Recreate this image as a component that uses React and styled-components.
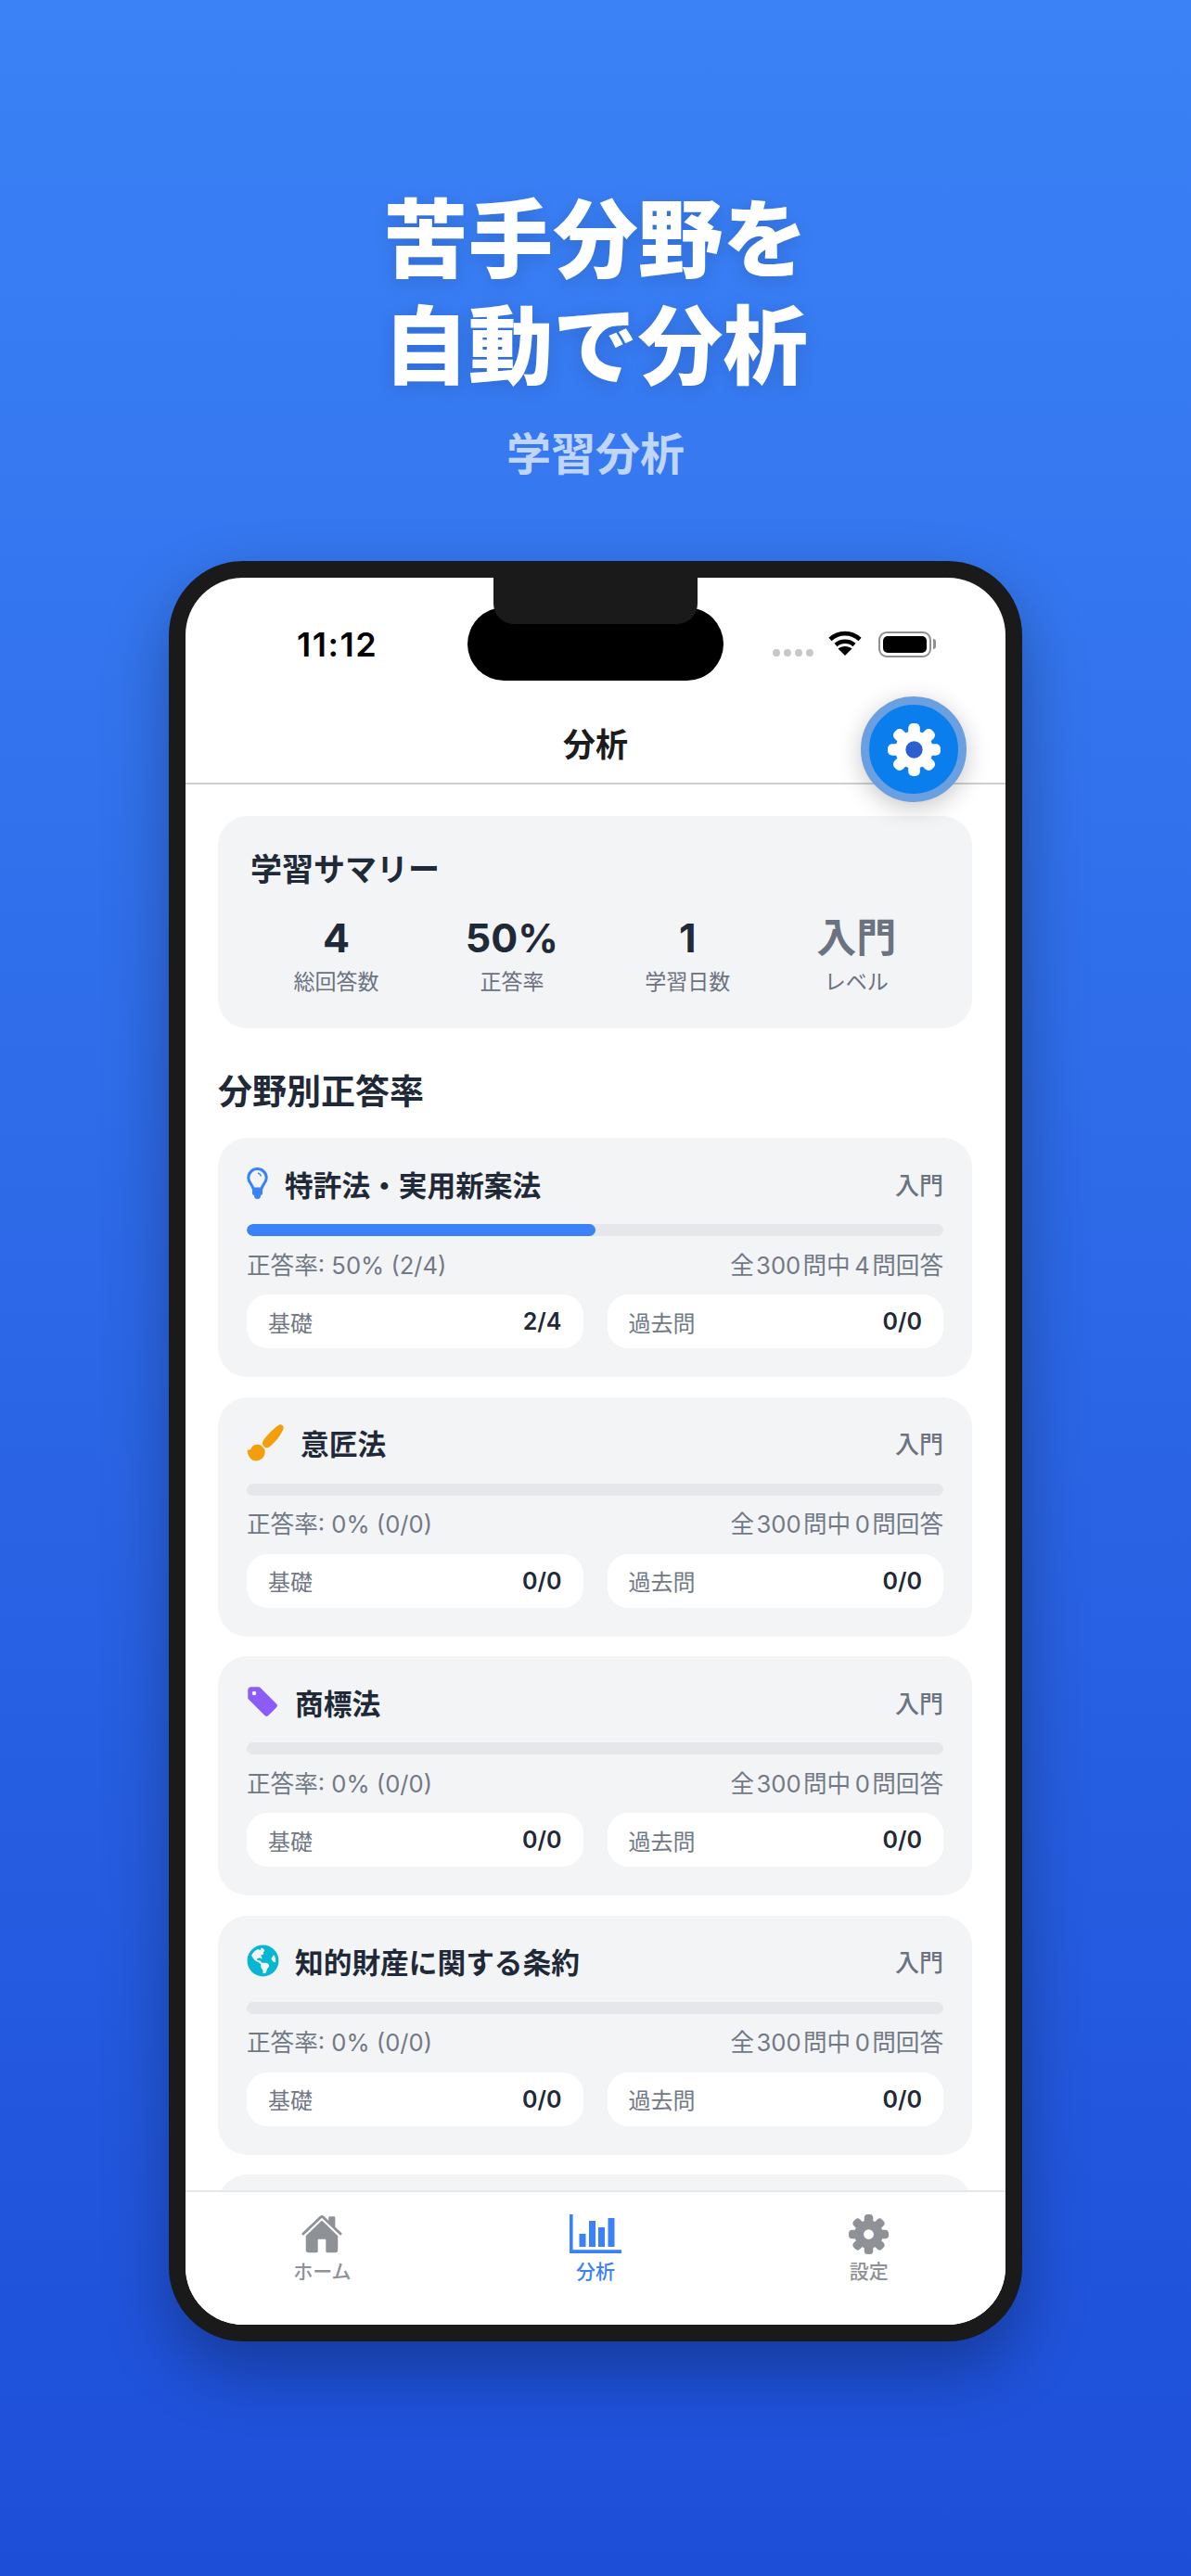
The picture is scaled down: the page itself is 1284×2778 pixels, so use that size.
import React from "react";
import styled, { createGlobalStyle } from "styled-components";
import { IoPricetag, IoHome } from "react-icons/io5";
import { FaGlobeAmericas } from "react-icons/fa";

const Global = createGlobalStyle`
  html, body { margin: 0; padding: 0; }
  body { font-family: Inter, "Noto Sans CJK JP", sans-serif; }
`;

const Page = styled.div`
  width: 1284px;
  height: 2778px;
  overflow: hidden;
  background: linear-gradient(180deg, #3b82f6 0%, #1d4ed8 100%);
  display: flex;
  flex-direction: column;
  align-items: center;
  padding-top: 195px;
  box-sizing: border-box;
`;
const HeroTitle = styled.h1`
  margin: 0;
  font-family: "Noto Sans CJK JP", sans-serif;
  font-size: 91.5px;
  line-height: 114.5px;
  font-weight: 900;
  color: #fff;
  text-align: center;
  text-shadow: 0 4px 20px rgba(0, 0, 0, 0.12);
`;
const HeroSub = styled.div`
  margin-top: 32px;
  font-family: "Noto Sans CJK JP", sans-serif;
  font-size: 48px;
  line-height: 60px;
  font-weight: 700;
  color: rgba(255, 255, 255, 0.7);
`;
const Phone = styled.div`
  margin-top: 89px;
  width: 920px;
  height: 1920px;
  flex: none;
  box-sizing: border-box;
  padding: 18px;
  background: #1a1a1a;
  border-radius: 80px;
  box-shadow: 0 30px 70px rgba(0, 0, 0, 0.3);
`;
const Screen = styled.div`
  position: relative;
  width: 884px;
  height: 1884px;
  background: #fff;
  border-radius: 62px;
  overflow: hidden;
  display: flex;
  flex-direction: column;
`;
const Notch = styled.div`
  position: absolute;
  top: 0;
  left: 332px;
  width: 220px;
  height: 50px;
  background: #1a1a1a;
  border-radius: 0 0 22px 22px;
  z-index: 3;
`;
const Island = styled.div`
  position: absolute;
  top: 32px;
  left: 304px;
  width: 276px;
  height: 79px;
  background: #000;
  border-radius: 40px;
  z-index: 2;
`;
const StatusBar = styled.div`
  height: 136px;
  flex: none;
  box-sizing: border-box;
  padding: 54px 80px 0 120px;
  display: flex;
  justify-content: space-between;
  align-items: flex-start;
`;
const Time = styled.div`
  font-size: 36px;
  line-height: 36px;
  font-weight: 600;
  letter-spacing: 1.5px;
  color: #000;
`;
const StatusIcons = styled.div`
  display: flex;
  align-items: center;
  height: 36px;
`;
const Dots = styled.div`
  display: flex;
  gap: 4px;
  margin-right: 16px;
  margin-top: 18px;
`;
const Dot = styled.span`
  width: 8px;
  height: 8px;
  border-radius: 50%;
  background: #c7c7cc;
`;
const Battery = styled.div`
  margin-left: 18px;
  width: 57px;
  height: 28px;
  box-sizing: border-box;
  border: 2.5px solid #8e8e93;
  border-radius: 9px;
  padding: 3px;
  position: relative;
  &::after {
    content: "";
    position: absolute;
    right: -6.5px;
    top: 6px;
    width: 3px;
    height: 11px;
    background: #8e8e93;
    border-radius: 0 3px 3px 0;
  }
`;
const BatteryFill = styled.div`
  width: 100%;
  height: 100%;
  background: #000;
  border-radius: 5px;
`;
const Header = styled.div`
  height: 87px;
  flex: none;
  box-sizing: border-box;
  border-bottom: 2px solid #cfcfd2;
  padding-bottom: 2px;
  display: flex;
  align-items: center;
  justify-content: center;
  font-size: 35px;
  font-weight: 600;
  color: #1c1c1e;
`;
const Fab = styled.div`
  position: absolute;
  top: 128px;
  left: 728px;
  width: 114px;
  height: 114px;
  box-sizing: border-box;
  border-radius: 50%;
  background: #0b7eee;
  border: 9px solid #6aa0e0;
  display: flex;
  align-items: center;
  justify-content: center;
  box-shadow: 0 6px 26px rgba(0, 0, 0, 0.22);
  z-index: 4;
`;
const Scroll = styled.div`
  flex: 1;
  min-height: 0;
  overflow: hidden;
  padding: 34px 36px 0 35px;
`;
const Summary = styled.section`
  height: 229px;
  box-sizing: border-box;
  background: #f3f4f6;
  border-radius: 32px;
  padding: 38px 35px 0;
`;
const SummaryTitle = styled.h2`
  margin: 0;
  font-size: 34px;
  line-height: 40px;
  font-weight: 600;
  color: #1f2937;
`;
const StatsRow = styled.div`
  margin-top: 25px;
  display: flex;
  justify-content: space-around;
`;
const Stat = styled.div`
  display: flex;
  flex-direction: column;
  align-items: center;
`;
const StatValue = styled.div`
  font-size: 43px;
  line-height: 56px;
  font-weight: 700;
  color: ${(p) => (p.$muted ? "#6b7280" : "#1f2937")};
`;
const StatLabel = styled.div`
  margin-top: 3px;
  font-size: 23px;
  line-height: 34px;
  color: #6b7280;
`;
const SectionTitle = styled.h2`
  margin: 44px 0 24px;
  font-size: 37px;
  line-height: 50px;
  font-weight: 600;
  color: #1f2937;
`;
const Cards = styled.div`
  display: flex;
  flex-direction: column;
  gap: 21.5px;
`;
const Card = styled.article`
  height: 258px;
  flex: none;
  box-sizing: border-box;
  background: #f3f4f6;
  border-radius: 32px;
  padding: 28px 31px 31px;
`;
const CardHead = styled.div`
  height: 42px;
  display: flex;
  align-items: center;
  justify-content: space-between;
`;
const CardName = styled.div`
  display: flex;
  align-items: center;
  gap: 18px;
  font-size: 30.7px;
  font-weight: 600;
  color: #1f2937;
`;
const CardLevel = styled.div`
  font-size: 26px;
  font-weight: 500;
  color: #6b7280;
`;
const Track = styled.div`
  margin-top: 23px;
  height: 13px;
  border-radius: 7px;
  background: #e5e7eb;
  overflow: hidden;
`;
const Fill = styled.div`
  height: 100%;
  border-radius: 7px;
  background: #3b82f6;
`;
const RateRow = styled.div`
  margin-top: 13px;
  height: 32px;
  display: flex;
  align-items: center;
  justify-content: space-between;
  font-size: 25.6px;
  color: #727986;
`;
const Pills = styled.div`
  margin-top: 18px;
  display: grid;
  grid-template-columns: 1fr 1fr;
  gap: 26px;
`;
const Pill = styled.div`
  height: 58px;
  box-sizing: border-box;
  padding: 0 23px;
  background: #fff;
  border-radius: 22px;
  display: flex;
  align-items: center;
  justify-content: space-between;
`;
const PillLabel = styled.span`
  font-size: 24px;
  color: #727986;
`;
const PillValue = styled.span`
  font-size: 25px;
  font-weight: 600;
  color: #1f2937;
`;
const TabBar = styled.nav`
  height: 145px;
  flex: none;
  box-sizing: border-box;
  border-top: 2px solid #e5e7eb;
  background: #fff;
  display: grid;
  grid-template-columns: repeat(3, 294.67px);
`;
const Tab = styled.div`
  height: 96px;
  padding-top: 23px;
  display: flex;
  flex-direction: column;
  align-items: center;
  color: ${(p) => (p.$active ? "#3b82f6" : "#8e9196")};
`;
const TabIcon = styled.div`
  height: 44px;
  display: flex;
  align-items: center;
  justify-content: center;
`;
const TabLabel = styled.div`
  margin-top: 4px;
  font-size: 21px;
  line-height: 30px;
  font-weight: 500;
`;

const Wifi = () => (
  <svg width="36" height="28" viewBox="0 0 36 28" style={{ marginTop: -4 }}>
    <g fill="none" stroke="#000" strokeWidth="4.6">
      <path d="M2 10.5C11 2 25 2 34 10.5" />
      <path d="M8 16.5C13.5 11.5 22.5 11.5 28 16.5" />
    </g>
    <path d="M18 28L10.5 20.5C14.5 17 21.5 17 25.5 20.5Z" fill="#000" />
  </svg>
);

const Gear = ({ size, color, hole, r = 9 }) => (
  <svg width={size} height={size} viewBox="0 0 56 56">
    <g fill={color}>
      {[0, 1, 2, 3, 4, 5, 6, 7].map((i) => (
        <rect key={i} x="21.8" y="0" width="12.4" height="16" rx="5" transform={`rotate(${i * 45} 28 28)`} />
      ))}
      <circle cx="28" cy="28" r="20" />
    </g>
    <circle cx="28" cy="28" r={r} fill={hole} />
  </svg>
);

const Bulb = () => (
  <svg width="23" height="34" viewBox="0 0 23 34">
    <path
      d="M7 23C6.5 19 1.8 16.5 1.8 11.2A9.7 9.7 0 0 1 21.2 11.2C21.2 16.5 16.5 19 16 23Z"
      fill="none"
      stroke="#3b82f6"
      strokeWidth="3"
      strokeLinejoin="round"
    />
    <rect x="6" y="22" width="11" height="8" rx="2" fill="#3b82f6" />
    <rect x="8" y="27" width="7" height="7" rx="3.5" fill="#3b82f6" />
    <path d="M12 6A5 5 0 0 1 15.5 9.5" fill="none" stroke="#3b82f6" strokeWidth="1.3" />
  </svg>
);

const Brush = () => (
  <svg width="40" height="40" viewBox="0 0 120 120" fill="#f59e0b">
    <path d="M104 2C112 -2 122 6 118 16C110 38 88 62 72 74C66 78 58 76 54 70C50 64 50 58 54 52C66 34 88 12 104 2Z" />
    <path d="M2 82C8 86 14 80 16 74C22 66 36 62 46 68C56 76 62 84 58 96C54 112 38 120 26 118C12 116 2 100 2 82Z" />
  </svg>
);

const Chart = () => (
  <svg width="56" height="42" viewBox="0 0 56 42" fill="currentColor">
    <rect x="0" y="0" width="3.6" height="42" />
    <rect x="0" y="38.2" width="56" height="3.8" />
    <rect x="10.5" y="21" width="7" height="14" />
    <rect x="21" y="7" width="7" height="28" />
    <rect x="31" y="14" width="7" height="21" />
    <rect x="41.5" y="4" width="7" height="31" />
  </svg>
);

const total = (n) => `全\u200a300\u200a問中\u2009${n}\u200a問回答`;

const subjects = [
  { name: "特許法・実用新案法", icon: <Bulb />, pct: 50, rate: "正答率: 50% (2/4)", total: total(4), basic: "2/4" },
  { name: "意匠法", icon: <Brush />, pct: 0, rate: "正答率: 0% (0/0)", total: total(0), basic: "0/0" },
  { name: "商標法", icon: <IoPricetag size={36} color="#8b5cf6" style={{ transform: "scaleX(-1)", margin: "0 -1px" }} />, pct: 0, rate: "正答率: 0% (0/0)", total: total(0), basic: "0/0" },
  { name: "知的財産に関する条約", icon: <FaGlobeAmericas size={35} color="#06b6d4" style={{ marginRight: -1 }} />, pct: 0, rate: "正答率: 0% (0/0)", total: total(0), basic: "0/0" },
];

const stats = [
  { v: "4", l: "総回答数" },
  { v: "50%", l: "正答率" },
  { v: "1", l: "学習日数" },
  { v: "入門", l: "レベル", muted: true },
];

export default function App() {
  return (
    <Page>
      <Global />
      <HeroTitle>
        苦手分野を
        <br />
        自動で分析
      </HeroTitle>
      <HeroSub>学習分析</HeroSub>
      <Phone>
        <Screen>
          <Notch />
          <Island />
          <StatusBar>
            <Time>11:12</Time>
            <StatusIcons>
              <Dots>
                <Dot />
                <Dot />
                <Dot />
                <Dot />
              </Dots>
              <Wifi />
              <Battery>
                <BatteryFill />
              </Battery>
            </StatusIcons>
          </StatusBar>
          <Header>分析</Header>
          <Fab>
            <Gear size={57} color="#fff" hole="#2b5fd0" />
          </Fab>
          <Scroll>
            <Summary>
              <SummaryTitle>学習サマリー</SummaryTitle>
              <StatsRow>
                {stats.map((s) => (
                  <Stat key={s.l}>
                    <StatValue $muted={s.muted}>{s.v}</StatValue>
                    <StatLabel>{s.l}</StatLabel>
                  </Stat>
                ))}
              </StatsRow>
            </Summary>
            <SectionTitle>分野別正答率</SectionTitle>
            <Cards>
              {subjects.map((s) => (
                <Card key={s.name}>
                  <CardHead>
                    <CardName>
                      {s.icon}
                      {s.name}
                    </CardName>
                    <CardLevel>入門</CardLevel>
                  </CardHead>
                  <Track>
                    <Fill style={{ width: `${s.pct}%` }} />
                  </Track>
                  <RateRow>
                    <span>{s.rate}</span>
                    <span>{s.total}</span>
                  </RateRow>
                  <Pills>
                    <Pill>
                      <PillLabel>基礎</PillLabel>
                      <PillValue>{s.basic}</PillValue>
                    </Pill>
                    <Pill>
                      <PillLabel>過去問</PillLabel>
                      <PillValue>0/0</PillValue>
                    </Pill>
                  </Pills>
                </Card>
              ))}
              <Card />
            </Cards>
          </Scroll>
          <TabBar>
            <Tab>
              <TabIcon>
                <IoHome size={46} />
              </TabIcon>
              <TabLabel>ホーム</TabLabel>
            </Tab>
            <Tab $active>
              <TabIcon>
                <Chart />
              </TabIcon>
              <TabLabel>分析</TabLabel>
            </Tab>
            <Tab>
              <TabIcon>
                <Gear size={43} color="#8e9196" hole="#fff" r={7} />
              </TabIcon>
              <TabLabel>設定</TabLabel>
            </Tab>
          </TabBar>
        </Screen>
      </Phone>
    </Page>
  );
}
